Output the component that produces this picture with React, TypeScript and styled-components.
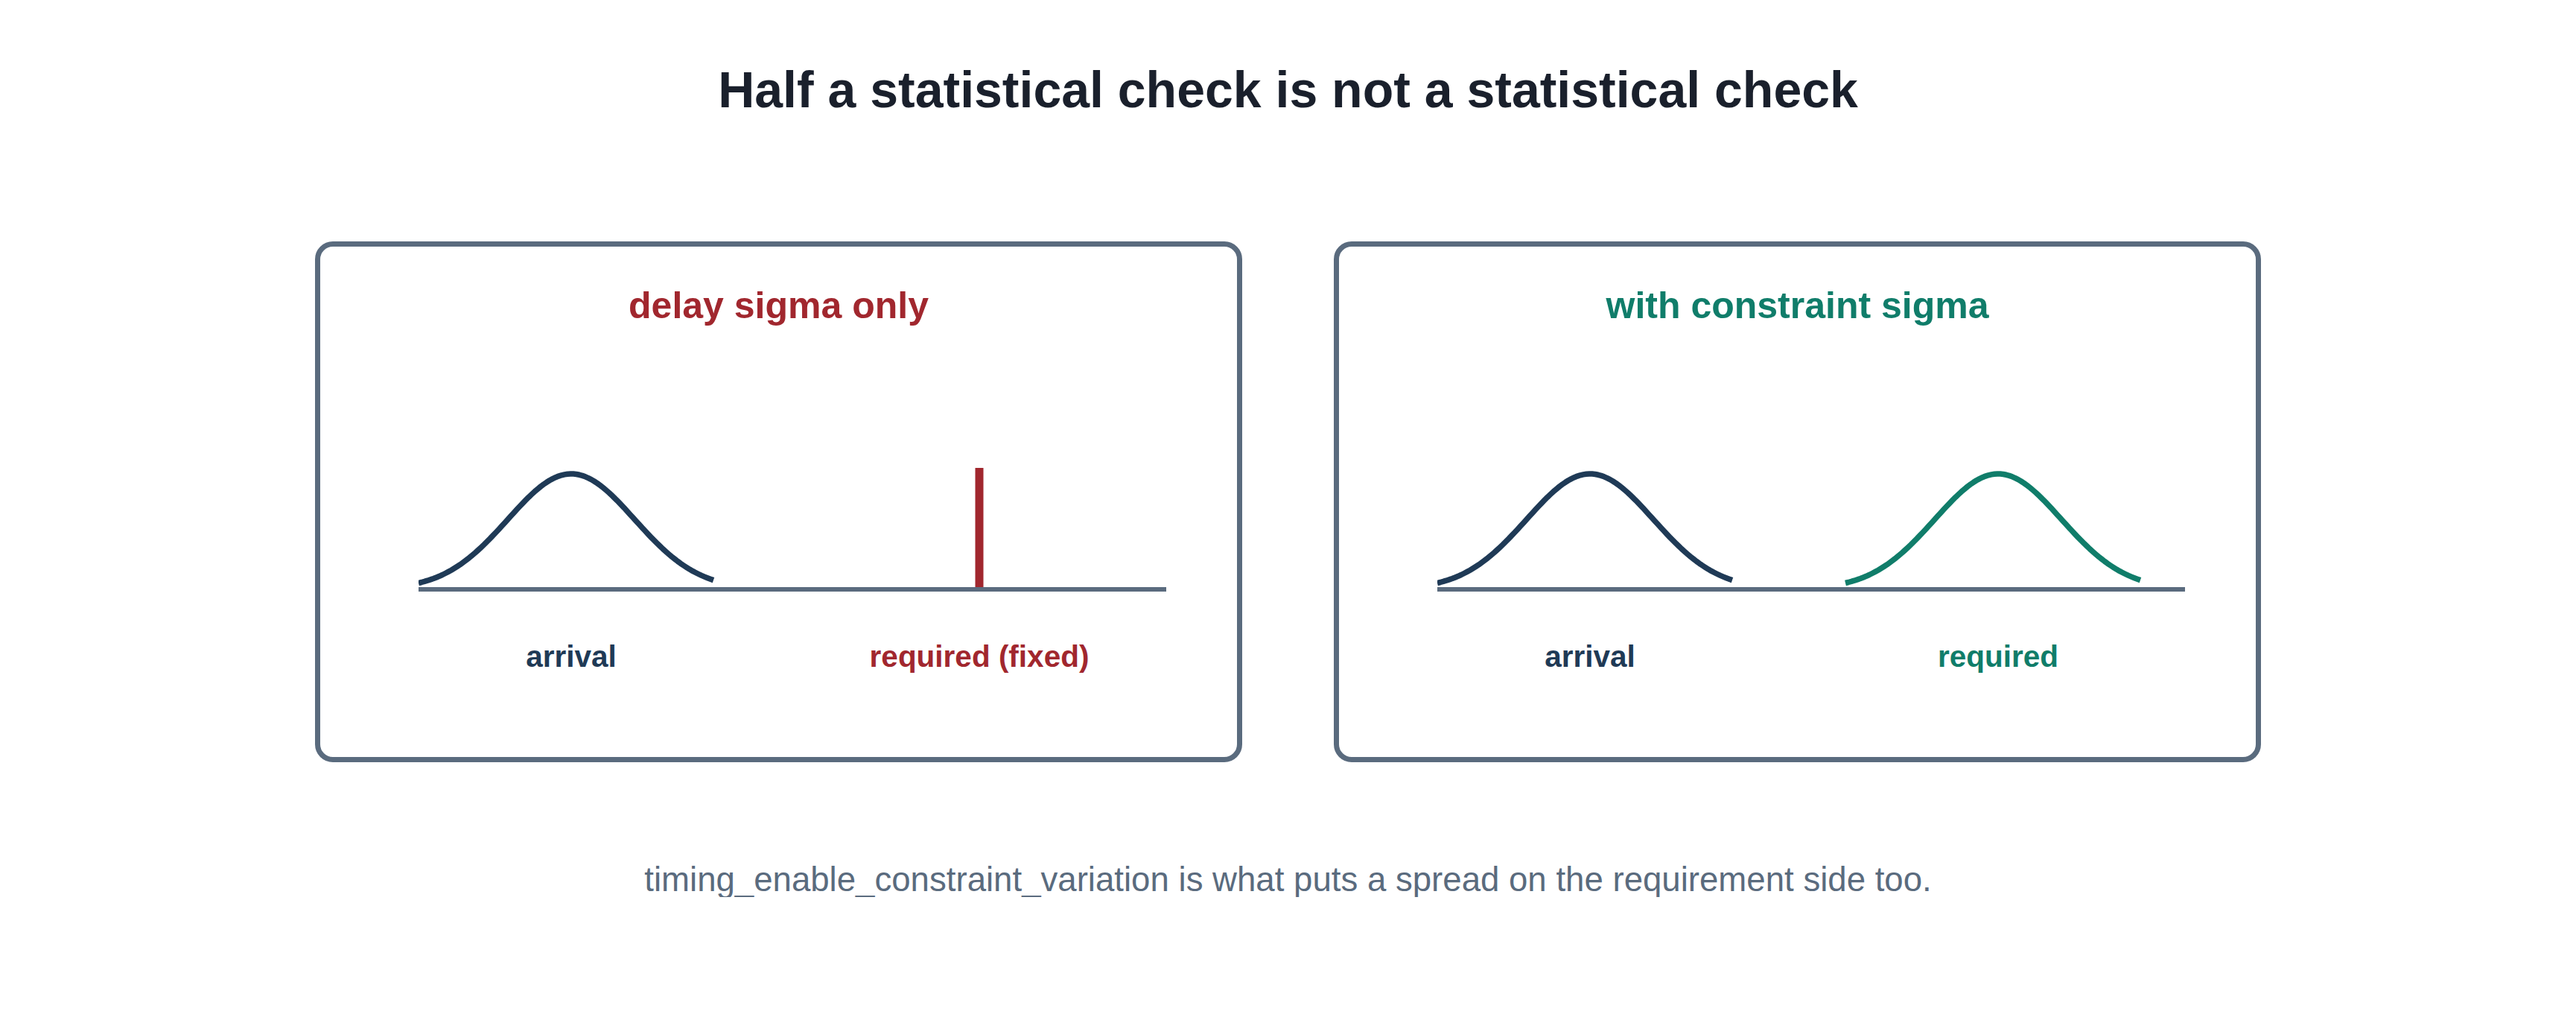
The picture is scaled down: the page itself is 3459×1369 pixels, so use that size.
import * as React from 'react';
import styled, { createGlobalStyle } from 'styled-components';

const SLATE = '#5a6b7e';
const NAVY = '#1f3a56';
const RED = '#a1272e';
const GREEN = '#107d6a';

const GlobalStyle = createGlobalStyle`
  html, body {
    margin: 0;
    padding: 0;
    background: #ffffff;
  }
  body {
    font-family: "Liberation Sans", Arial, sans-serif;
  }
`;

const Page = styled.div`
  display: flex;
  flex-direction: column;
  align-items: center;
  padding-top: 86px;
`;

const Title = styled.h1`
  margin: 0;
  font-size: 68px;
  line-height: 1;
  font-weight: 700;
  color: #1a202c;
`;

const PanelRow = styled.div`
  display: flex;
  gap: 123px;
  margin-top: 170px;
`;

const Panel = styled.section`
  box-sizing: border-box;
  width: 1245px;
  height: 699px;
  border: 7px solid ${SLATE};
  border-radius: 24px;
  padding-top: 54px;
  display: flex;
  flex-direction: column;
`;

const PanelTitle = styled.h2<{ $color: string }>`
  margin: 0;
  text-align: center;
  font-size: 50px;
  line-height: 1;
  font-weight: 700;
  color: ${(p) => p.$color};
`;

const ChartArea = styled.div`
  width: 1004px;
  margin: 184px 0 0 132px;
  display: flex;
  flex-direction: column;
`;

const ChartSvg = styled.svg`
  display: block;
`;

const Labels = styled.div`
  display: grid;
  grid-template-columns: 410px 410px;
  column-gap: 138px;
  margin-top: 62px;
`;

const Label = styled.div<{ $color: string }>`
  text-align: center;
  font-size: 40.5px;
  line-height: 1;
  font-weight: 700;
  color: ${(p) => p.$color};
`;

const Footnote = styled.p`
  margin: 135px 0 0;
  font-size: 45.6px;
  line-height: 1;
  color: ${SLATE};
`;

const CHART_W = 1004;
const CHART_H = 180;
const AXIS_Y = 172;

function bellPath(center: number) {
  const pts: string[] = [];
  for (let dx = -205; dx <= 193; dx += 4) {
    const y = AXIS_Y - 155 * Math.exp(-(dx * dx) / (2 * 85 * 85));
    pts.push(`${(center + dx).toFixed(1)},${y.toFixed(1)}`);
  }
  return 'M' + pts.join(' L');
}

type Marker = { kind: 'bell' | 'fixed'; color: string; label: string };

interface PanelData {
  title: string;
  color: string;
  markers: [Marker, Marker];
}

const panels: PanelData[] = [
  {
    title: 'delay sigma only',
    color: RED,
    markers: [
      { kind: 'bell', color: NAVY, label: 'arrival' },
      { kind: 'fixed', color: RED, label: 'required (fixed)' },
    ],
  },
  {
    title: 'with constraint sigma',
    color: GREEN,
    markers: [
      { kind: 'bell', color: NAVY, label: 'arrival' },
      { kind: 'bell', color: GREEN, label: 'required' },
    ],
  },
];

const centers = [205, 753];

function Chart({ markers }: { markers: [Marker, Marker] }) {
  return (
    <ChartSvg width={CHART_W} height={CHART_H} viewBox={`0 0 ${CHART_W} ${CHART_H}`}>
      {markers.map((m, i) =>
        m.kind === 'bell' ? (
          <path
            key={i}
            d={bellPath(centers[i])}
            fill="none"
            stroke={m.color}
            strokeWidth={7.5}
            strokeLinejoin="round"
          />
        ) : (
          <line
            key={i}
            x1={centers[i]}
            x2={centers[i]}
            y1={9}
            y2={AXIS_Y}
            stroke={m.color}
            strokeWidth={11}
          />
        )
      )}
      <line x1={0} x2={CHART_W} y1={AXIS_Y} y2={AXIS_Y} stroke={SLATE} strokeWidth={6} />
    </ChartSvg>
  );
}

export default function App() {
  return (
    <>
      <GlobalStyle />
      <Page>
        <Title>Half a statistical check is not a statistical check</Title>
        <PanelRow>
          {panels.map((p) => (
            <Panel key={p.title}>
              <PanelTitle $color={p.color}>{p.title}</PanelTitle>
              <ChartArea>
                <Chart markers={p.markers} />
                <Labels>
                  {p.markers.map((m) => (
                    <Label key={m.label} $color={m.color}>
                      {m.label}
                    </Label>
                  ))}
                </Labels>
              </ChartArea>
            </Panel>
          ))}
        </PanelRow>
        <Footnote>
          timing_enable_constraint_variation is what puts a spread on the requirement side too.
        </Footnote>
      </Page>
    </>
  );
}
